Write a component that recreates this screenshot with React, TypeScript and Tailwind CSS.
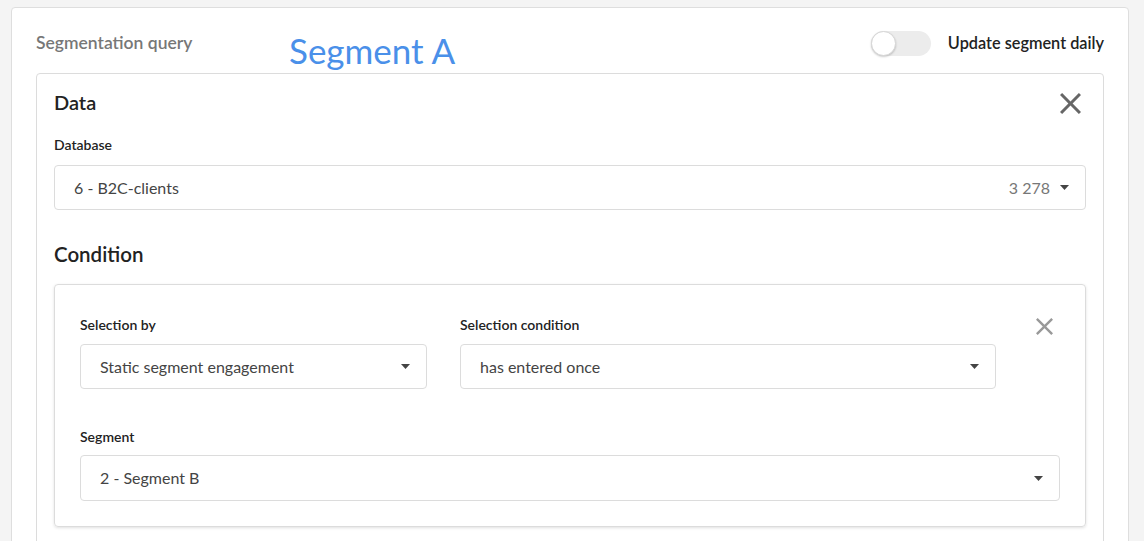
const font = { fontFamily: "Lato, 'Open Sans', sans-serif" };

function CloseIcon({ className }: { className?: string }) {
    return (
        <svg viewBox="5 5 14 14" className={className} fill="currentColor">
            <path d="M19 6.41L17.59 5 12 10.59 6.41 5 5 6.41 10.59 12 5 17.59 6.41 19 12 13.41 17.59 19 19 17.59 13.41 12z" />
        </svg>
    );
}

function Caret() {
    return (
        <svg width="9" height="5" viewBox="0 0 9 5" className="text-[#444]" fill="currentColor">
            <path d="M0 0h9L4.5 5z" />
        </svg>
    );
}

function Select({ value, extra, className }: { value: string; extra?: string; className?: string }) {
    return (
        <div
            className={
                "flex items-center h-[45px] border border-[#dcdcdc] rounded-[4px] bg-white pl-[19px] pr-[16px] " +
                (className ?? "")
            }
        >
            <span className="text-[16px] text-[#444]">{value}</span>
            <div className="ml-auto flex items-center gap-[10px]">
                {extra && <span className="text-[16px] text-[#777]">{extra}</span>}
                <Caret />
            </div>
        </div>
    );
}

export default function App() {
    return (
        <div className="min-h-[541px] bg-[#f4f4f4] pt-[7px] pl-[11px] pr-[15px] overflow-hidden" style={font}>
            <div className="bg-white border border-[#dedede] rounded-[4px] px-[24px] h-[560px]">
                <div className="flex items-start h-[65px]">
                    <div className="mt-[22px] w-[253px] text-[17.5px] font-semibold text-[#777]">Segmentation query</div>
                    <div className="mt-[21px] text-[35px] leading-[42px] text-[#4a90e9] font-normal">Segment A</div>
                    <div className="ml-auto mt-[23px] flex items-center">
                        <div className="relative w-[60px] h-[25px] rounded-full bg-[#ececec]">
                            <div className="absolute left-0 top-0 w-[25px] h-[25px] rounded-full bg-white border border-[#d6d6d6] shadow-[0_1px_2px_rgba(0,0,0,0.2)]" />
                        </div>
                        <span className="ml-[17px] text-[16.3px] font-semibold text-[#222]">Update segment daily</span>
                    </div>
                </div>

                <div className="border border-[#dcdcdc] rounded-[4px] px-[17px] pt-[14px] pb-[30px]">
                    <div className="flex items-start justify-between">
                        <h2 className="text-[20px] leading-[28px] font-semibold text-[#222]">Data</h2>
                        <CloseIcon className="w-[21px] h-[21px] mt-[5px] mr-[5px] text-[#666]" />
                    </div>
                    <div className="mt-[19px] text-[14px] leading-[20px] font-semibold text-[#222]">Database</div>
                    <Select className="mt-[10px] h-[44px]" value="6 - B2C-clients" extra="3 278" />

                    <h2 className="mt-[30px] text-[20.5px] leading-[28px] font-semibold text-[#222]">Condition</h2>

                    <div className="mt-[16px] border border-[#dcdcdc] rounded-[4px] shadow-[0_1px_3px_rgba(0,0,0,0.12)] px-[25px] pt-[30px] pb-[25px]">
                        <div className="flex items-start">
                            <div className="w-[347px]">
                                <div className="text-[14px] leading-[20px] font-semibold text-[#222]">Selection by</div>
                                <Select className="mt-[9px] h-[45px]" value="Static segment engagement" />
                            </div>
                            <div className="ml-[33px] w-[536px]">
                                <div className="text-[14px] leading-[20px] font-semibold text-[#222]">Selection condition</div>
                                <Select className="mt-[9px] h-[45px]" value="has entered once" />
                            </div>
                            <CloseIcon className="ml-[40px] mt-[3px] w-[17px] h-[17px] text-[#999]" />
                        </div>
                        <div className="mt-[38px] text-[14px] leading-[20px] font-semibold text-[#222]">Segment</div>
                        <Select className="mt-[8px] h-[46px]" value="2 - Segment B" />
                    </div>
                </div>
            </div>
        </div>
    );
}
